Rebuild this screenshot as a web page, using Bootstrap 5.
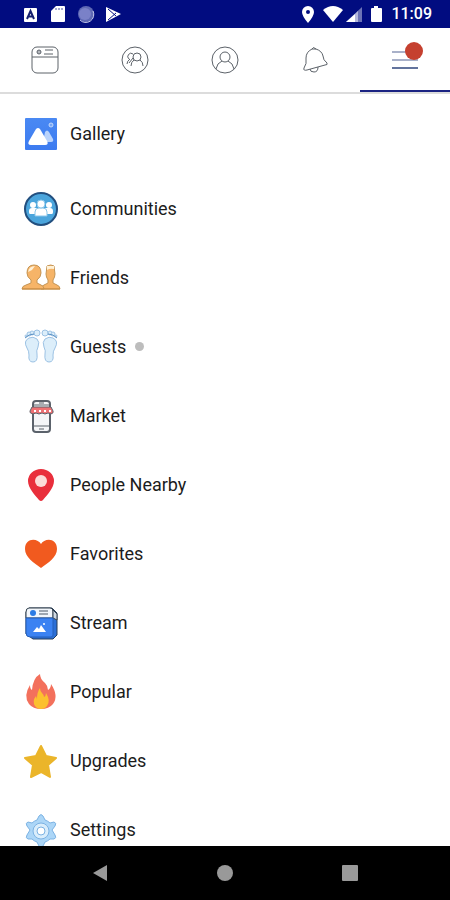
<!DOCTYPE html>
<html lang="en">
<head>
<meta charset="utf-8">
<meta name="viewport" content="width=device-width, initial-scale=1">
<title>Menu</title>
<link href="https://cdn.jsdelivr.net/npm/bootstrap@5.3.0/dist/css/bootstrap.min.css" rel="stylesheet">
<style>
  body { font-family: Roboto, "Liberation Sans", sans-serif; color: #1c1c1c; background: #fff; }
  svg { display: block; flex: none; }
  .status-bar { background: #010c80; height: 28px; padding: 0 18px 0 22px; color: #fff; }
  .clock { font-size: 16px; line-height: 28px; font-weight: 500; }
  .tab-strip { height: 66px; border-bottom: 2px solid #dcdcdc; }
  .tab-strip a { color: #5c6269; border-bottom: 2px solid transparent; padding-top: 2px; }
  .tab-strip a.active { border-bottom-color: #1b2382; }
  .alert-dot { width: 18px; height: 18px; background: #c5402f; top: -2px; right: -2px; }
  .menu-list { scrollbar-width: none; }
  .menu-list::-webkit-scrollbar { display: none; }
  .menu-row { height: 69px; gap: 9px; padding-left: 21px; color: #1c1c1c; font-size: 18px; line-height: 24px; }
  .menu-row.first { height: 80px; }
  .guest-dot { width: 9px; height: 9px; background: #bdbdbd; }
  .system-bar { background: #000; height: 54px; padding: 0 38px; }
  .system-bar button { color: #999; }
</style>
<script src="https://cdn.jsdelivr.net/npm/bootstrap@5.3.0/dist/js/bootstrap.bundle.min.js"></script>
</head>
<body class="d-flex flex-column vh-100 overflow-hidden">

<header class="flex-shrink-0">
  <div class="status-bar d-flex align-items-center justify-content-between">
    <div class="d-flex align-items-center">
      <svg width="100" height="20" viewBox="0 0 100 20" fill="#fff" aria-hidden="true">
        <rect x="2" y="4" width="13" height="14" rx="1"/>
        <path d="M5 15 8.500 7 12 15M6.500 12.500h4" fill="none" stroke="#16206f" stroke-width="2"/>
        <path d="M34 2h8q1 0 1 1v14q0 1-1 1H30q-1 0-1-1V7Z"/>
        <path d="M34 4v2M37 4v2M40 4v2" stroke="#4a52a4"/>
        <circle cx="64" cy="10" r="8" fill="#5f69b4"/><circle cx="63" cy="10" r="6" fill="#7a81c8"/>
        <path d="M58 16a8 8 0 0 0 13-9" fill="none" stroke="#c6caec" stroke-width="1"/>
        <path d="M84 3 99 10 84 18Z"/>
        <path d="M86 5 94 12M86 16 94 9" stroke="#010c80" stroke-width="1"/>
      </svg>
    </div>
    <div class="d-flex align-items-center gap-2">
      <svg width="81" height="20" viewBox="0 0 81 20" fill="#fff" aria-hidden="true">
        <path fill-rule="evenodd" d="M6 2a6 6 0 0 1 6 6q0 4-6 11Q0 12 0 8a6 6 0 0 1 6-6Zm0 4a2 2 0 1 0 0 4 2 2 0 0 0 0-4Z"/>
        <path d="M21 6q10-8 20 0L31 18Z"/>
        <path d="M60 3v15H44Z" fill="#6c73b6"/><path d="M53 10v8h-9Z"/><path d="M53 10 56 7v11h-3Z" fill="#b4b8dc"/>
        <path d="M72 2h4v2h3q1 0 1 1v12q0 1-1 1h-9q-1 0-1-1V5q0-1 1-1h2Z"/>
      </svg>
      <span class="clock">11:09</span>
    </div>
  </div>

  <nav class="tab-strip row row-cols-5 g-0" aria-label="Main">
    <a class="col d-flex align-items-center justify-content-center" href="#feed" aria-label="Feed">
      <svg width="32" height="32" viewBox="0 0 32 32" fill="none" stroke="currentColor">
        <rect x="3" y="3" width="26" height="26" rx="5"/><path d="M3 13h26M16 6h8M15 10h9"/><circle cx="10" cy="8" r="2" fill="#b4b8bd"/>
      </svg>
    </a>
    <a class="col d-flex align-items-center justify-content-center" href="#communities" aria-label="Communities feed">
      <svg width="32" height="32" viewBox="0 0 32 32" fill="none" stroke="currentColor">
        <circle cx="16" cy="16" r="13"/><circle cx="18" cy="13" r="4"/><path d="M12 22q0-4 3-6M21 16q3 2 3 6M14 10a3 3 0 0 0-4 5M11 15q-3 2-3 5M14 14l-4 5"/>
      </svg>
    </a>
    <a class="col d-flex align-items-center justify-content-center" href="#profile" aria-label="Profile">
      <svg width="32" height="32" viewBox="0 0 32 32" fill="none" stroke="currentColor">
        <circle cx="16" cy="16" r="13"/><circle cx="16" cy="13" r="5"/><path d="M7 25q1-6 6-8M19 17q5 2 6 8"/>
      </svg>
    </a>
    <a class="col d-flex align-items-center justify-content-center" href="#notifications" aria-label="Notifications">
      <svg width="32" height="32" viewBox="0 0 32 32" fill="none" stroke="currentColor" stroke-linejoin="round">
        <path d="M13 5q1-3 4 0 6 2 7 7 0 4 4 7 1 2-2 2L8 26q-4 1-3-2 3-4 2-10 0-6 6-9ZM13 5l4 0M11 25q0 3 4 3 4 0 4-5"/>
      </svg>
    </a>
    <a class="col d-flex align-items-center justify-content-center active" href="#menu" aria-current="page" aria-label="Menu">
      <span class="position-relative">
        <svg width="32" height="32" viewBox="0 0 32 32" fill="none" stroke-width="2">
          <path d="M3 8h26M3 16h26" stroke="#a9b1c9"/><path d="M3 24h26" stroke="#63749d"/>
        </svg>
        <span class="alert-dot position-absolute rounded-circle"></span>
      </span>
    </a>
  </nav>
</header>

<main class="menu-list flex-grow-1 overflow-auto">
  <ul class="list-unstyled mb-0">
    <li><a class="menu-row first d-flex align-items-center text-decoration-none" href="#gallery">
      <svg width="40" height="40" viewBox="0 0 40 40" aria-hidden="true">
        <defs><linearGradient id="sky" x1="0" y1="0" x2="0" y2="1"><stop stop-color="#4a89f3"/><stop offset="1" stop-color="#3c7bf0"/></linearGradient></defs>
        <rect x="4" y="4" width="32" height="32" rx="1" fill="url(#sky)"/>
        <path d="M24 18q2-3 4 0l4 7q1 3-2 3h-8Z" fill="#b9d3fc"/>
        <path d="M15 15q2-2 4 0l7 12q2 4-2 4H10q-4 0-2-4Z" fill="#fff"/>
        <circle cx="30" cy="11" r="2" fill="#76a7f7" stroke="#c3d9fd"/>
      </svg>Gallery</a></li>
    <li><a class="menu-row d-flex align-items-center text-decoration-none" href="#communities">
      <svg width="40" height="40" viewBox="0 0 40 40" aria-hidden="true">
        <circle cx="20" cy="20" r="16" fill="#4ba5dc" stroke="#224f7f" stroke-width="2"/>
        <g fill="#fff"><circle cx="12" cy="16" r="3"/><circle cx="28" cy="16" r="3"/><path d="M11 19h5v6H9q-1 0-1-2v-1q0-3 3-3ZM24 19h5q3 0 3 3v1q0 2-1 2h-7Z"/></g>
        <g fill="#fff" stroke="#8cc7ea" stroke-width="1"><path d="M14 27v-4q0-4 4-4h4q4 0 4 4v4Z"/><circle cx="20" cy="15" r="4"/></g>
      </svg>Communities</a></li>
    <li><a class="menu-row d-flex align-items-center text-decoration-none" href="#friends">
      <svg width="40" height="40" viewBox="0 0 40 40" fill="#f6b468" stroke="#c49555" aria-hidden="true">
        <path d="M20 31q0-3 3-4l4-2v-3q-2-3-2-6l1-8q4-2 7 0l1 8q0 3-2 6v3l4 2q3 1 3 4Z"/>
        <path d="M26 8h7v3q-4-1-7 1Z" fill="#fff1d6" stroke="none"/>
        <path d="M1 31q0-3 4-4l5-2v-3q-4-3-4-7 0-8 7-8t7 8q0 4-4 7v3l4 2q3 1 3 4Z"/>
        <path d="M7 14q1-6 7-6l-3 4Z" fill="#fff1d6" stroke="none"/>
        <path d="M1 31h38" stroke="#c9893d"/>
      </svg>Friends</a></li>
    <li><a class="menu-row d-flex align-items-center text-decoration-none" href="#guests">
      <svg width="40" height="40" viewBox="0 0 40 40" fill="#dceefa" stroke="#9cc2e4" aria-hidden="true">
        <defs><g id="foot"><path d="M8 11q4-2 8 1 3 3 1 8-2 4-1 7 1 8-4 8t-4-7q0-4-2-7-4-7 2-10Z"/><ellipse cx="16" cy="6" rx="3" ry="3"/><circle cx="11" cy="6" r="2"/><circle cx="8" cy="7" r="2"/><circle cx="5" cy="9" r="1"/><path d="M4 11Q8 7 13 7" fill="none" stroke="#5d92c5"/></g></defs>
        <use href="#foot"/><use href="#foot" transform="translate(40 0) scale(-1 1)"/>
      </svg>Guests<span class="guest-dot rounded-circle"></span></a></li>
    <li><a class="menu-row d-flex align-items-center text-decoration-none" href="#market">
      <svg width="40" height="40" viewBox="0 0 40 40" aria-hidden="true">
        <rect x="12" y="5" width="17" height="31" rx="3" fill="#f5f6f8" stroke="#5b626b" stroke-width="2"/>
        <path d="M13 30h15M18 33h5M13 9h15M18 7h5" stroke="#5b626b" stroke-width="1"/>
        <path d="M11 11h19l2 4q1 2-2 3l-3-1-3 1-3-1-3 1-3-1-3 1q-4-1-3-3Z" fill="#ee7174" stroke="#5b626b" stroke-linejoin="round"/>
        <path d="M13 15h2M18 15h2M23 15h2M28 15h2" stroke="#fff" stroke-width="2"/>
      </svg>Market</a></li>
    <li><a class="menu-row d-flex align-items-center text-decoration-none" href="#nearby">
      <svg width="40" height="40" viewBox="0 0 40 40" aria-hidden="true">
        <path d="M20 4a13 12 0 0 1 13 12c0 7-7 14-11 19q-2 2-4 0C14 30 7 23 7 16A13 12 0 0 1 20 4Z" fill="#e92f3c"/><circle cx="20" cy="16" r="6" fill="#fbdcd9"/>
      </svg>People Nearby</a></li>
    <li><a class="menu-row d-flex align-items-center text-decoration-none" href="#favorites">
      <svg width="40" height="40" viewBox="0 0 40 40" aria-hidden="true">
        <path d="M20 10C23 4 36 3 36 15c0 8-9 14-16 19C13 29 4 23 4 15 4 3 17 4 20 10Z" fill="#f15a1f"/>
      </svg>Favorites</a></li>
    <li><a class="menu-row d-flex align-items-center text-decoration-none" href="#stream">
      <svg width="40" height="40" viewBox="0 0 40 40" stroke-linejoin="round" aria-hidden="true">
        <path d="M8 5h23l5 5v22l-4 4H12l-7-5V9Z" fill="#2b6fd6" stroke="#273d59"/>
        <path d="M8 5h21q3 0 3 3v7H5V9q0-4 3-4Z" fill="#f2f6fb" stroke="#34424f"/>
        <path d="M32 7l4 4v6l-4-2Z" fill="#cfd8e2" stroke="#34424f"/>
        <circle cx="12" cy="10" r="3" fill="#2b7be4"/><path d="M18 8h9M18 11h9" stroke="#4c5966"/>
        <path d="M5 15h27v17q0 2-2 2H9q-4 0-4-4Z" fill="#3b82f2" stroke="#245fb9"/>
        <path d="M12 29l4-5 2 2 2-4 5 7Z" fill="#fff"/><circle cx="23" cy="21" r="1" fill="#fff"/>
      </svg>Stream</a></li>
    <li><a class="menu-row d-flex align-items-center text-decoration-none" href="#popular">
      <svg width="40" height="40" viewBox="0 0 40 40" aria-hidden="true">
        <path d="M19 2q0 5 5 9 3 3 3 7 3-2 3-6 8 12 2 20-4 5-12 5T8 32Q2 24 9 13q0 4 2 5 1-12 8-16Z" fill="#f3705c"/>
        <path d="M19 16q0 3 2 5t2 4q2-1 2-4 5 8 1 13-2 3-6 3t-6-3q-3-5 1-10l1 3q0-7 3-11Z" fill="#fcc02f"/>
      </svg>Popular</a></li>
    <li><a class="menu-row d-flex align-items-center text-decoration-none" href="#upgrades">
      <svg width="40" height="40" viewBox="0 0 40 40" aria-hidden="true">
        <path d="M20 5l5 10 10 2-8 7 2 12-9-5-10 5 2-12-8-7 11-2Z" fill="#ebb52a" stroke="#ebb52a" stroke-width="2" stroke-linejoin="round"/>
      </svg>Upgrades</a></li>
    <li><a class="menu-row d-flex align-items-center text-decoration-none" href="#settings">
      <svg width="40" height="40" viewBox="0 0 40 40" stroke="#7bb2e3" stroke-linejoin="round" aria-hidden="true">
        <path d="M18 6q2-3 4 0l2 4q3 1 5 3l4-1q3 1 1 4l-3 4 3 5q2 3-1 4l-4 0q-2 2-5 3l-2 4q-2 3-4 0l-2-4q-3-1-5-3l-4 0q-3-1-1-4l3-5-3-4q-2-3 1-4l4 1q2-2 5-3Z" fill="#acd6f7"/>
        <circle cx="20" cy="21" r="8" fill="#d9edfb"/><circle cx="20" cy="21" r="4" fill="#fff"/>
      </svg>Settings</a></li>
  </ul>
</main>

<footer class="system-bar flex-shrink-0 row row-cols-3 g-0 align-items-center">
  <button class="btn border-0 p-0 col d-flex justify-content-center" type="button" aria-label="Back"><svg width="16" height="16" viewBox="0 0 16 16" fill="currentColor"><path d="M1 8 15 0v16Z"/></svg></button>
  <button class="btn border-0 p-0 col d-flex justify-content-center" type="button" aria-label="Home"><svg width="16" height="16" viewBox="0 0 16 16" fill="currentColor"><circle cx="8" cy="8" r="8"/></svg></button>
  <button class="btn border-0 p-0 col d-flex justify-content-center" type="button" aria-label="Recent apps"><svg width="16" height="16" viewBox="0 0 16 16" fill="currentColor"><rect width="16" height="16" rx="1"/></svg></button>
</footer>
</body>
</html>
